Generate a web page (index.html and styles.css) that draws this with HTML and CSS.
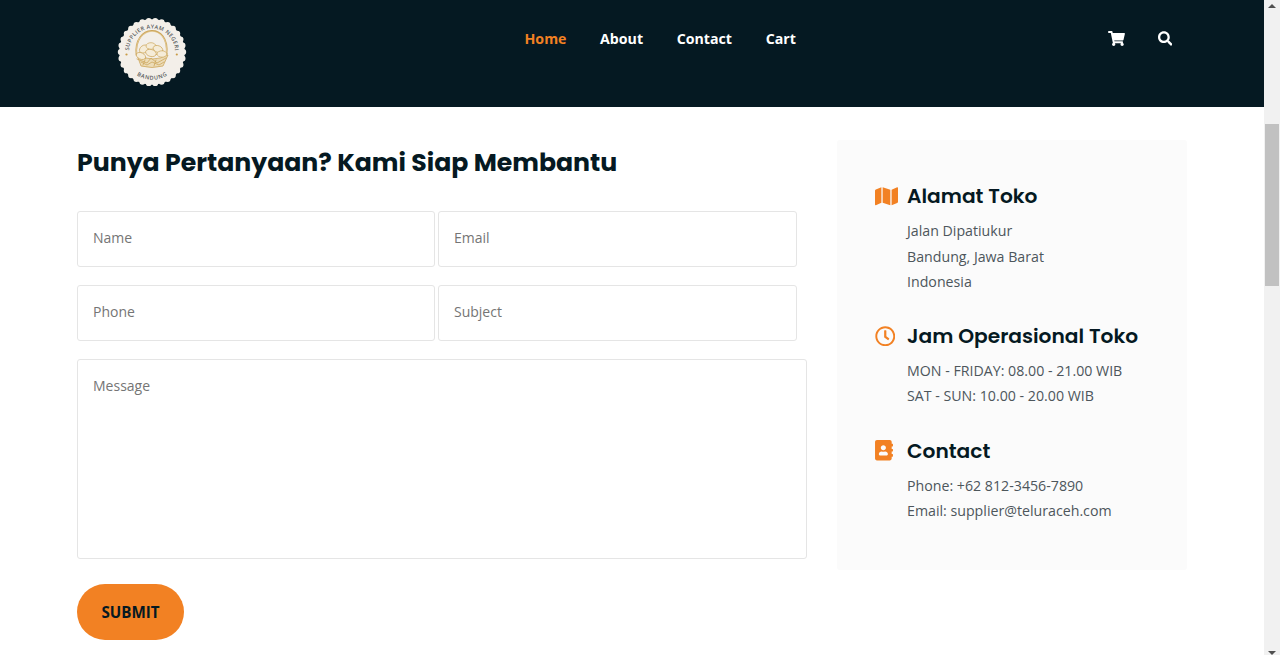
FILE: index.html
```html
<!DOCTYPE html>
<html lang="id">
<head>
<meta charset="utf-8">
<title>Supplier Ayam Negeri Bandung</title>
<link rel="stylesheet" href="styles.css">
</head>
<body>
<div class="viewport">
  <div class="page">
    <header class="header">
      <a class="logo" href="#">
        <svg width="70" height="70" viewBox="0 0 70 70">
          <defs>
            <path id="arc-top" d="M13.4 42.500A23 23 0 1 1 56.600 42.500"/>
            <path id="arc-bottom" d="M8.500 42A27.300 27.300 0 0 0 61.500 42"/>
          </defs>
          <circle cx="35" cy="35" r="32.800" fill="#f3efe9"/>
          <circle class="scallop" cx="35" cy="35" r="31.300" pathLength="300"/>
          <text class="seal-text"><textPath href="#arc-top" startOffset="50%" text-anchor="middle" textLength="70">SUPPLIER AYAM NEGERI</textPath></text>
          <text class="seal-text"><textPath href="#arc-bottom" startOffset="50%" text-anchor="middle" textLength="32">BANDUNG</textPath></text>
          <g fill="#c99b45"><circle cx="9.500" cy="37.500" r="1.100"/><circle cx="59.800" cy="37.500" r="1.100"/></g>
          <g fill="none" stroke="#cda75d" stroke-linecap="round">
            <path stroke-width="1.700" d="M19.500 38C16 7 53 5 49.500 37"/>
            <path stroke="#f3e3bd" stroke-width=".5" d="M19.500 36C17 8 52 7 49.500 35"/>
            <path fill="#ecdcb8" stroke-width=".8" d="M20 38l4 11q11 3 22 0l5-11q-15 8-31 0z"/>
            <g fill="#f5ecd8" stroke-width=".7">
              <ellipse cx="27" cy="32" rx="5" ry="3.600" transform="rotate(-35 27 32)"/>
              <ellipse cx="34" cy="29" rx="5" ry="3.300"/>
              <ellipse cx="41" cy="32" rx="5" ry="3.300" transform="rotate(20 41 32)"/>
              <ellipse cx="34" cy="36" rx="5.500" ry="3.500" transform="rotate(15 34 36)"/>
              <ellipse cx="45" cy="37" rx="5" ry="3.200"/>
              <ellipse cx="24" cy="39" rx="5" ry="3.200" transform="rotate(25 24 39)"/>
            </g>
            <path stroke-width=".8" d="M20 42l10 4 4-5 6 5 9-5M24 45l6 3 5-3 7 3 5-3M28 43l-2 5M39 43l-2 6"/>
          </g>
        </svg>
      </a>
      <nav class="nav">
        <a class="active" href="#">Home</a>
        <a href="#">About</a>
        <a href="#">Contact</a>
        <a href="#">Cart</a>
      </nav>
      <div class="tools">
        <svg width="17" height="15" viewBox="0 0 576 512"><path d="M528.12 301.319l47.273-208C578.806 78.301 567.391 64 551.99 64H159.208l-9.166-44.81C147.758 8.021 137.93 0 126.529 0H24C10.745 0 0 10.745 0 24v16c0 13.255 10.745 24 24 24h69.883l70.248 343.435C147.325 417.1 136 435.222 136 456c0 30.928 25.072 56 56 56s56-25.072 56-56c0-15.674-6.447-29.835-16.824-40h209.647C430.447 426.165 424 440.326 424 456c0 30.928 25.072 56 56 56s56-25.072 56-56c0-22.172-12.888-41.332-31.579-50.405l5.517-24.276c3.413-15.018-8.002-29.319-23.403-29.319H218.117l-6.545-32h293.145c11.206 0 20.92-7.754 23.403-18.681z"/></svg>
        <svg width="14.500" height="15" viewBox="0 0 512 512"><path d="M505 442.7L405.3 343c-4.5-4.5-10.6-7-17-7H372c27.6-35.3 44-79.7 44-128C416 93.1 322.9 0 208 0S0 93.1 0 208s93.1 208 208 208c48.3 0 92.7-16.4 128-44v16.3c0 6.4 2.5 12.5 7 17l99.7 99.7c9.4 9.4 24.6 9.4 33.9 0l28.3-28.3c9.4-9.4 9.4-24.6.1-34zM208 336c-70.7 0-128-57.2-128-128 0-70.7 57.2-128 128-128 70.7 0 128 57.2 128 128 0 70.7-57.2 128-128 128z"/></svg>
      </div>
    </header>
    <main class="content">
      <section class="contact">
        <h2 class="title">Punya Pertanyaan? Kami Siap Membantu</h2>
        <form class="form">
          <div class="row">
            <input class="field" type="text" placeholder="Name">
            <input class="field" type="email" placeholder="Email">
          </div>
          <div class="row">
            <input class="field" type="tel" placeholder="Phone">
            <input class="field" type="text" placeholder="Subject">
          </div>
          <textarea class="field message" placeholder="Message"></textarea>
          <button class="submit" type="button">SUBMIT</button>
        </form>
      </section>
      <aside class="info">
        <div class="block">
          <h4><svg width="23" height="20.500" viewBox="0 0 576 512"><path d="M0 117.66v346.32c0 11.32 11.43 19.06 21.94 14.86L160 416V32L20.12 87.95A32.006 32.006 0 0 0 0 117.66zM192 416l192 64V96L192 32v384zM554.06 33.16L416 96v384l139.88-55.95A31.996 31.996 0 0 0 576 394.34V48.02c0-11.32-11.43-19.06-21.94-14.86z"/></svg><span>Alamat Toko</span></h4>
          <p>Jalan Dipatiukur<br>Bandung, Jawa Barat<br>Indonesia</p>
        </div>
        <div class="block">
          <h4><svg width="20.500" height="20.500" viewBox="0 0 512 512"><path d="M256 8C119 8 8 119 8 256s111 248 248 248 248-111 248-248S393 8 256 8zm0 448c-110.5 0-200-89.5-200-200S145.500 56 256 56s200 89.500 200 200-89.500 200-200 200zm61.800-104.400l-84.900-61.700c-3.100-2.300-4.900-5.900-4.900-9.700V116c0-6.600 5.400-12 12-12h32c6.600 0 12 5.400 12 12v141.700l66.800 48.600c5.400 3.900 6.500 11.400 2.600 16.800L334.600 349c-3.900 5.300-11.400 6.500-16.800 2.600z"/></svg><span>Jam Operasional Toko</span></h4>
          <p>MON - FRIDAY: 08.00 - 21.00 WIB<br>SAT - SUN: 10.00 - 20.00 WIB</p>
        </div>
        <div class="block">
          <h4><svg width="18" height="20.500" viewBox="0 0 448 512"><path d="M436 160c6.600 0 12-5.400 12-12v-40c0-6.600-5.400-12-12-12h-20V48c0-26.500-21.500-48-48-48H48C21.500 0 0 21.500 0 48v416c0 26.500 21.500 48 48 48h320c26.500 0 48-21.500 48-48v-48h20c6.600 0 12-5.400 12-12v-40c0-6.600-5.400-12-12-12h-20v-64h20c6.600 0 12-5.400 12-12v-40c0-6.600-5.400-12-12-12h-20v-64h20zm-228-32c35.300 0 64 28.700 64 64s-28.700 64-64 64-64-28.700-64-64 28.700-64 64-64zm112 236.800c0 10.600-10 19.200-22.400 19.200H118.400C106 384 96 375.400 96 364.800v-19.200c0-31.800 30.100-57.600 67.200-57.600h5c12.300 5.100 25.700 8 39.800 8s27.600-2.900 39.800-8h5c37.100 0 67.200 25.800 67.200 57.600v19.200z"/></svg><span>Contact</span></h4>
          <p>Phone: +62 812-3456-7890<br>Email: supplier@teluraceh.com</p>
        </div>
      </aside>
    </main>
  </div>
  <div class="scrollbar">
    <svg width="8" height="4" viewBox="0 0 8 4"><path d="M0 4l4-4 4 4z"/></svg>
    <div class="thumb"></div>
    <svg width="8" height="4" viewBox="0 0 8 4"><path d="M0 0h8l-4 4z"/></svg>
  </div>
</div>
</body>
</html>
```
FILE: styles.css
```css
* { box-sizing: border-box; }

body {
  margin: 0;
  overflow: hidden;
  font-family: "Open Sans", sans-serif;
  font-size: 14.2px;
  color: #051922;
  background: #fff;
}

.viewport { display: flex; height: 655px; }
.page { flex: 1; }

.header {
  display: grid;
  grid-template-columns: 407.500px 1fr auto;
  align-items: start;
  height: 107px;
  padding: 17px 92px 0 117px;
  background: #051922;
}
.logo { display: block; height: 70px; }
.scallop {
  fill: none;
  stroke: #f3efe9;
  stroke-width: 5.8;
  stroke-linecap: round;
  stroke-dasharray: 0 10;
}
.seal-text {
  font-family: "Open Sans", sans-serif;
  font-size: 5.5px;
  font-weight: 600;
  fill: #55595a;
}

.nav { display: flex; gap: 33.6px; padding-top: 12px; line-height: 20px; }
.nav a { color: #fff; font-weight: 700; text-decoration: none; }
.nav a.active { color: #f28123; }
.tools { display: flex; gap: 32.5px; padding-top: 14px; fill: #fff; }

.content {
  display: grid;
  grid-template-columns: 730px 350px;
  gap: 30px;
  padding: 33px 77px 0;
  align-items: start;
}
.title {
  margin: 6px 0 32px;
  font: 700 25.18px/33px Poppins, Inter, sans-serif;
  white-space: nowrap;
}
.form { display: flex; flex-direction: column; align-items: flex-start; }
.row { display: flex; gap: 3px; margin-bottom: 18px; }
.field {
  width: 358px;
  height: 56px;
  padding: 13px 15px 17px;
  border: 1px solid #e5e5e5;
  border-radius: 3px;
  background: #fff;
  font: 14px/24px "Open Sans", sans-serif;
}
.field + .field { width: 359px; }
.field::placeholder { color: #757575; opacity: 1; }
.field.message { width: 730px; height: 200px; padding-top: 14px; resize: none; }
.submit {
  width: 107px;
  height: 56px;
  margin-top: 25px;
  padding: 0 0 1px;
  border: 0;
  border-radius: 28px;
  background: #f28123;
  color: #051922;
  font: 700 15.2px/24px "Open Sans", sans-serif;
}

.info {
  display: flex;
  flex-direction: column;
  gap: 27px;
  height: 430px;
  padding: 41px 37px;
  border-radius: 3px;
  background: #fbfbfb;
}
.block h4 {
  display: grid;
  grid-template-columns: 33px 1fr;
  align-items: center;
  margin: 0 0 7.3px;
  font: 600 20.2px/30px Poppins, Inter, sans-serif;
  white-space: nowrap;
}
.block svg { margin-left: 0.5px; fill: #f28123; }
.block p {
  margin: 0 0 0 33px;
  color: #4d565b;
  line-height: 25.2px;
}

.scrollbar {
  display: flex;
  flex-direction: column;
  align-items: center;
  width: 16px;
  padding-top: 4px;
  background: #f1f1f1;
  fill: #505050;
}
.thumb { width: 14px; height: 162px; margin: 116px 0 365px; background: #c1c1c1; }
```
